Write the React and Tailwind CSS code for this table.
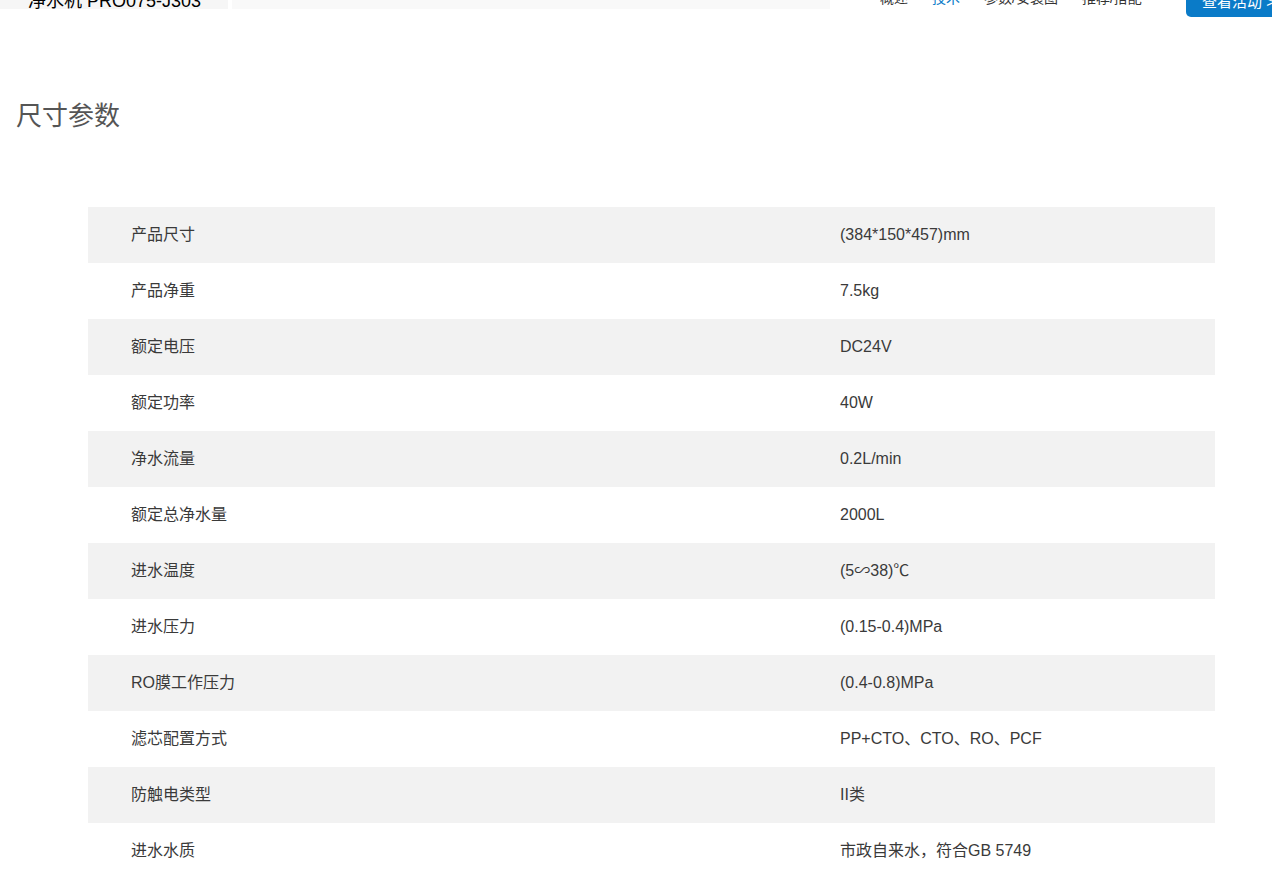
const specs = [
  ["产品尺寸", "(384*150*457)mm"],
  ["产品净重", "7.5kg"],
  ["额定电压", "DC24V"],
  ["额定功率", "40W"],
  ["净水流量", "0.2L/min"],
  ["额定总净水量", "2000L"],
  ["进水温度", "(5∽38)℃"],
  ["进水压力", "(0.15-0.4)MPa"],
  ["RO膜工作压力", "(0.4-0.8)MPa"],
  ["滤芯配置方式", "PP+CTO、CTO、RO、PCF"],
  ["防触电类型", "II类"],
  ["进水水质", "市政自来水，符合GB 5749"],
]

export default function App() {
  return (
    <div className="min-h-[893px] bg-white font-['Liberation_Sans','Noto_Sans_CJK_SC',sans-serif] overflow-hidden">
      {/* sticky bar, scrolled mostly out of view */}
      <div className="relative h-[17px]">
        <div className="absolute left-0 top-0 flex h-[9px] w-[830px]">
          <div className="w-[228px] bg-[#f6f6f6]" />
          <div className="w-[4px] bg-white" />
          <div className="flex-1 bg-[#f9f9f9]" />
        </div>
        <div className="absolute left-[28px] top-[-8px] text-[18px] leading-none text-black whitespace-nowrap">
          净水机 PRO075-J303
        </div>
        <nav className="absolute left-[880px] top-[-9px] flex gap-[24px] text-[14px] leading-none text-[#333] whitespace-nowrap">
          <span>概述</span>
          <span className="text-[#0a7bc8]">技术</span>
          <span>参数/安装图</span>
          <span>推荐/搭配</span>
        </nav>
        <div className="absolute left-[1186px] top-[-20px] flex h-[37px] w-[110px] items-end rounded-[5px] bg-[#0a7bc8] pb-[8px] pl-[16px] text-[15px] leading-none text-white whitespace-nowrap">
          查看活动 &gt;
        </div>
      </div>

      <h2 className="mt-[84px] pl-[16px] text-[26px] leading-[30px] text-[#555]">尺寸参数</h2>

      <div className="mx-[88px] mt-[76px] w-[1127px]">
        {specs.map(([k, v], i) => (
          <div
            key={k}
            className={`flex h-[56px] items-center text-[16px] text-[#3a3a3a] ${i % 2 === 0 ? "bg-[#f2f2f2]" : "bg-white"}`}
          >
            <div className="w-[752px] pl-[43px]">{k}</div>
            <div>{v}</div>
          </div>
        ))}
      </div>
    </div>
  )
}
